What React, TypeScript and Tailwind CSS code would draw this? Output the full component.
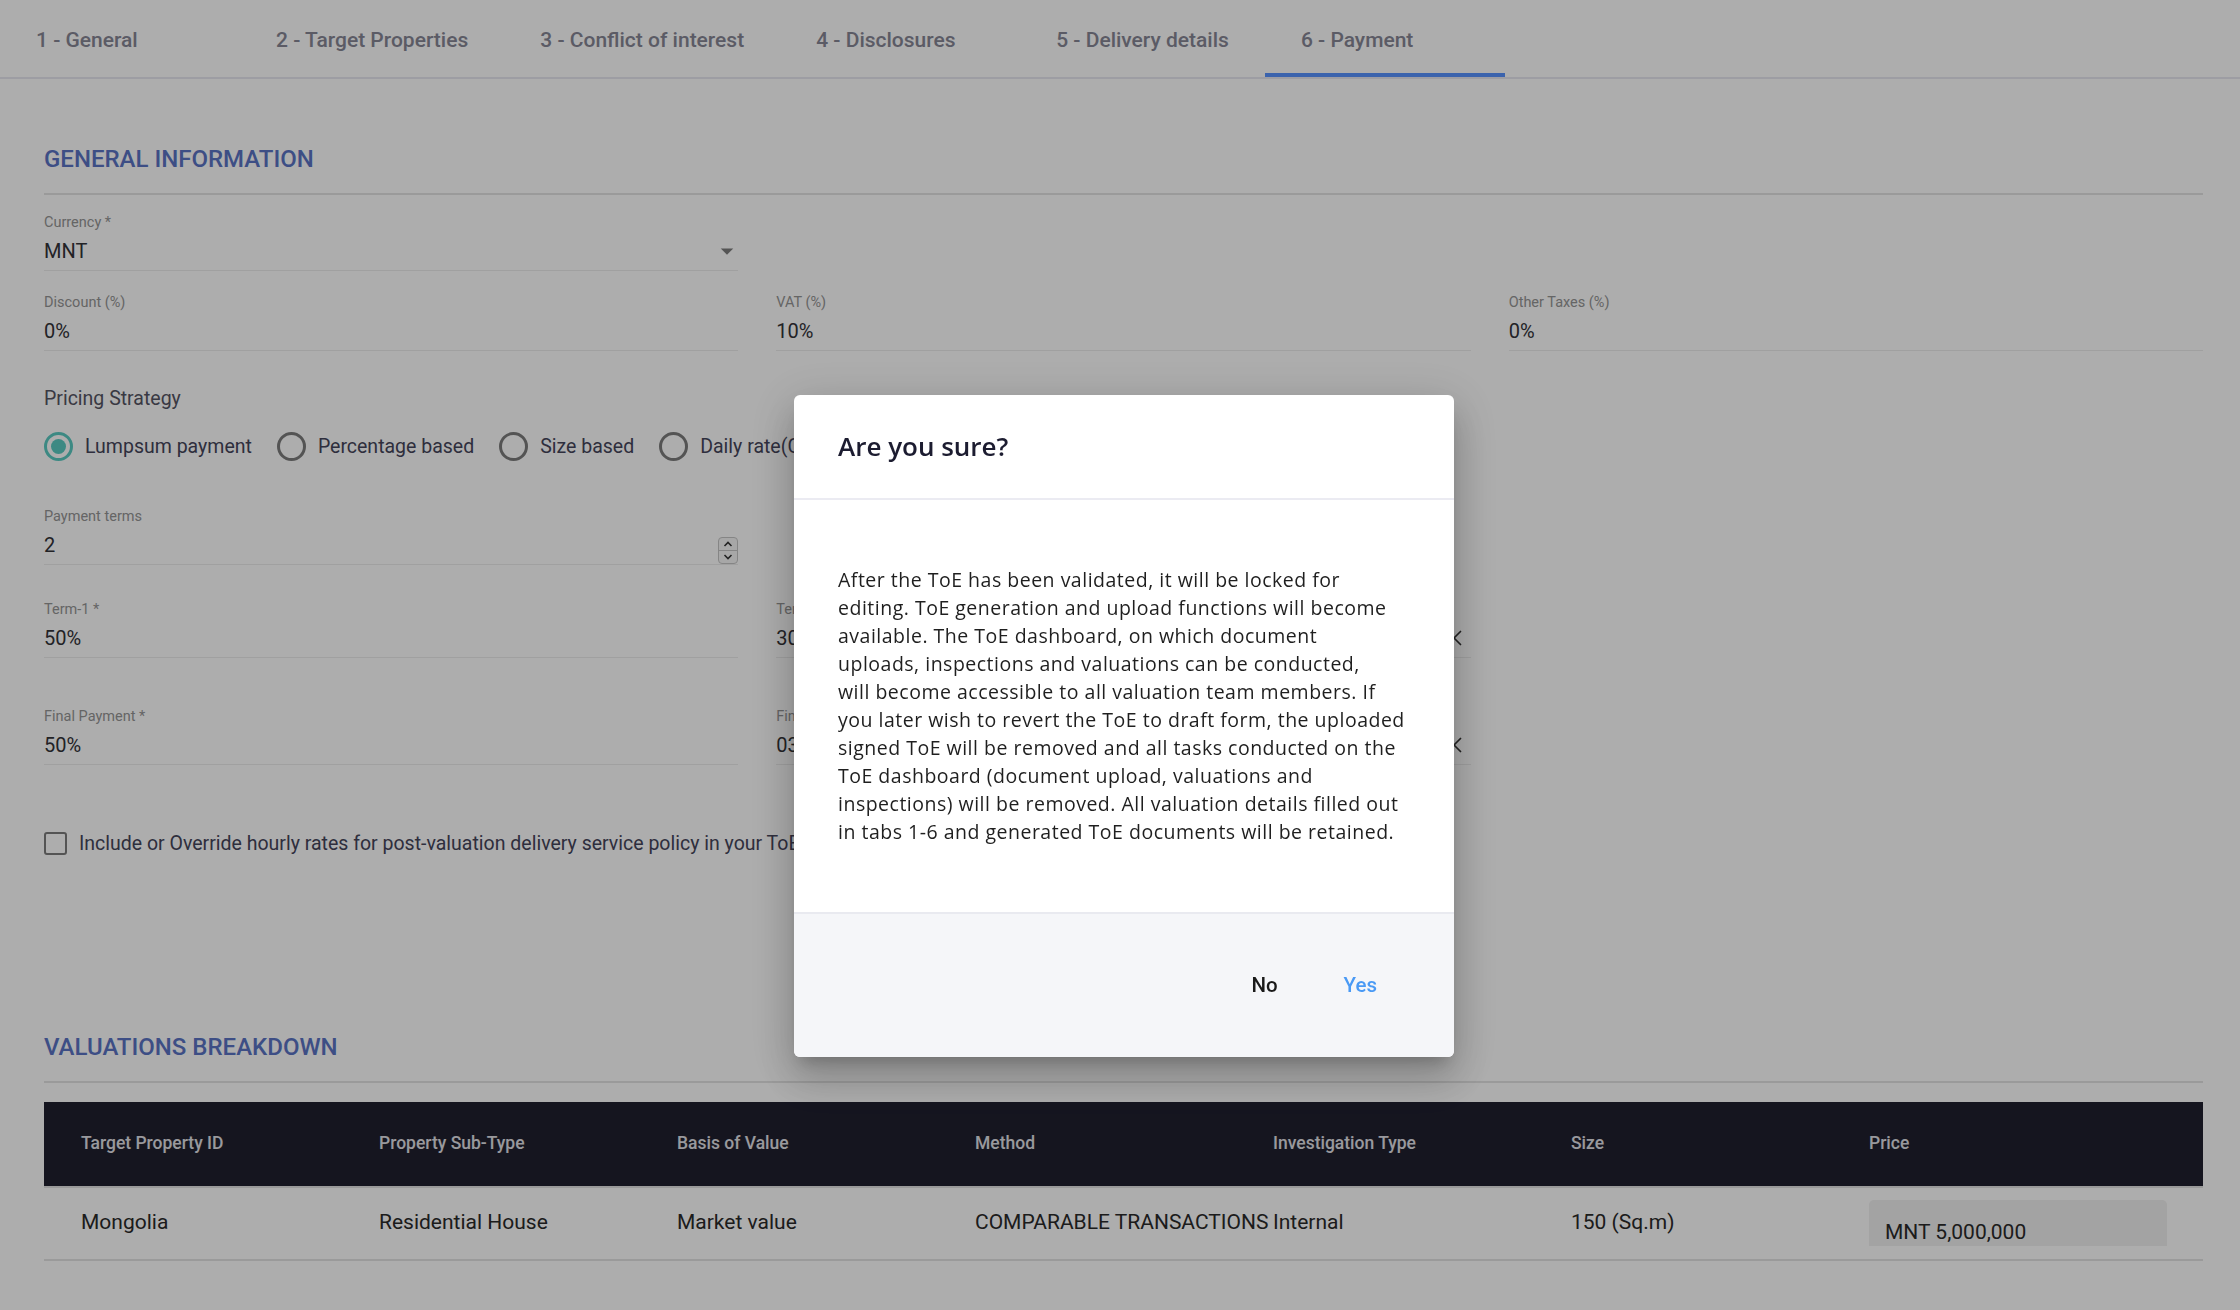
import { X } from 'lucide-react';

const tabs = [
  '1 - General',
  '2 - Target Properties',
  '3 - Conflict of interest',
  '4 - Disclosures',
  '5 - Delivery details',
  '6 - Payment',
];

const columns = [
  'Target Property ID',
  'Property Sub-Type',
  'Basis of Value',
  'Method',
  'Investigation Type',
  'Size',
  'Price',
];

const dialogLines = [
  'After the ToE has been validated, it will be locked for',
  'editing. ToE generation and upload functions will become',
  'available. The ToE dashboard, on which document',
  'uploads, inspections and valuations can be conducted,',
  'will become accessible to all valuation team members. If',
  'you later wish to revert the ToE to draft form, the uploaded',
  'signed ToE will be removed and all tasks conducted on the',
  'ToE dashboard (document upload, valuations and',
  'inspections) will be removed. All valuation details filled out',
  'in tabs 1-6 and generated ToE documents will be retained.',
];

type FieldProps = {
  label: string;
  value: string;
  adornment?: React.ReactNode;
};

// Underlined text field, label on top
const Field = ({ label, value, adornment }: FieldProps) => (
  <div className="flex flex-col">
    <span className="mb-[8px] text-[14.5px] leading-[17px] text-[#959595]">{label}</span>
    <div className="box-content flex h-[24px] items-center justify-between border-b border-[#ececec] pb-[7px]">
      <span className="text-[20px] leading-[24px] text-[#333338]">{value}</span>
      {adornment}
    </div>
  </div>
);

const Radio = ({ checked, label }: { checked?: boolean; label: string }) => (
  <label className="flex items-center gap-[12px]">
    <span
      className={`flex h-[29px] w-[29px] items-center justify-center rounded-full border-[3px] ${
        checked ? 'border-[#5acbc2]' : 'border-[#7d7d7d]'
      }`}
    >
      {checked && <span className="h-[15px] w-[15px] rounded-full bg-[#5acbc2]" />}
    </span>
    <span className="text-[19.5px] text-[#45455a]">{label}</span>
  </label>
);

const SectionTitle = ({ children }: { children: React.ReactNode }) => (
  <h2 className="border-b-2 border-[#e4e4e4] pb-[20px] text-[24px] font-medium leading-[28px] text-[#5a74c5]">
    {children}
  </h2>
);

const App = () => {
  return (
    <div className="relative min-h-[1310px] bg-white font-['Roboto',sans-serif]">
      {/* Step tabs */}
      <nav className="flex h-[79px] border-b-2 border-[#e7e7f0]">
        {tabs.map((tab, i) => (
          <div
            key={tab}
            className="relative flex min-w-[240px] items-center px-[36px] pt-[5px] text-[21px] font-medium text-[#878796]"
          >
            {tab}
            {i === tabs.length - 1 && (
              <span className="absolute bottom-0 left-0 right-0 h-[4px] bg-[#5893ff]" />
            )}
          </div>
        ))}
      </nav>

      <main className="pl-[44px] pr-[37px]">
        {/* GENERAL INFORMATION */}
        <section className="pt-[66px]">
          <SectionTitle>GENERAL INFORMATION</SectionTitle>

          <div className="mt-[19px] grid grid-cols-3 gap-x-[38px] gap-y-[23px]">
            <Field
              label="Currency *"
              value="MNT"
              adornment={
                <svg viewBox="0 0 24 24" className="mr-[-4px] h-[30px] w-[30px] fill-[#7d7d7d]">
                  <path d="M7 10l5 5 5-5z" />
                </svg>
              }
            />
            <div className="col-span-2" />
            <Field label="Discount (%)" value="0%" />
            <Field label="VAT (%)" value="10%" />
            <Field label="Other Taxes (%)" value="0%" />
          </div>

          <p className="mt-[36px] text-[19.5px] leading-[24px] text-[#555564]">Pricing Strategy</p>
          <div className="mt-[21px] flex items-center gap-[25px]">
            <Radio checked label="Lumpsum payment" />
            <Radio label="Percentage based" />
            <Radio label="Size based" />
            <Radio label="Daily rate(Currency)" />
          </div>

          <div className="mt-[47px] grid grid-cols-3 gap-x-[38px]">
            <Field
              label="Payment terms"
              value="2"
              adornment={
                <span className="mb-[-10px] flex h-[27px] w-[20px] flex-col items-center justify-center rounded-[4px] border border-[#c4c4c4] bg-[#f7f7f7]">
                  <svg viewBox="0 0 10 6" className="h-[6px] w-[10px] fill-none stroke-[#333] stroke-[1.6]">
                    <path d="M1.5 5L5 1.5 8.5 5" />
                  </svg>
                  <span className="my-[3px] h-px w-full bg-[#c4c4c4]" />
                  <svg viewBox="0 0 10 6" className="h-[6px] w-[10px] fill-none stroke-[#333] stroke-[1.6]">
                    <path d="M1.5 1L5 4.5 8.5 1" />
                  </svg>
                </span>
              }
            />
          </div>

          <div className="mt-[36px] grid grid-cols-3 gap-x-[38px] gap-y-[50px]">
            <Field label="Term-1 *" value="50%" />
            <Field
              label="Term-1 Due Date *"
              value="30/06/2024"
              adornment={<X className="mr-[4px] h-[26px] w-[26px] text-[#333]" strokeWidth={1.6} />}
            />
            <div />
            <Field label="Final Payment *" value="50%" />
            <Field
              label="Final Payment Due Date *"
              value="03/07/2024"
              adornment={<X className="mr-[4px] h-[26px] w-[26px] text-[#333]" strokeWidth={1.6} />}
            />
            <div />
          </div>

          <label className="mt-[64px] flex items-center gap-[12px]">
            <span className="h-[23px] w-[23px] rounded-[3px] border-[2.5px] border-[#7d7d7d]" />
            <span className="text-[19.5px] text-[#45455a]">
              Include or Override hourly rates for post-valuation delivery service policy in your ToE
            </span>
          </label>
        </section>

        {/* VALUATIONS BREAKDOWN */}
        <section className="mt-[174px]">
          <SectionTitle>VALUATIONS BREAKDOWN</SectionTitle>

          <div className="mt-[19px]">
            <div className="grid h-[86px] grid-cols-[298px_298px_298px_298px_298px_298px_1fr] items-center border-b-2 border-[#e3e3e3] bg-[#1f1f2e]">
              {columns.map((c) => (
                <span key={c} className="pl-[37px] text-[17.5px] font-medium text-[#e2e2e8]">
                  {c}
                </span>
              ))}
            </div>
            <div className="grid h-[73px] grid-cols-[298px_298px_298px_298px_298px_298px_1fr] items-center border-b-2 border-[#e3e3e3] text-[21px] text-[#2a2a2a]">
              <span className="pl-[37px]">Mongolia</span>
              <span className="pl-[37px]">Residential House</span>
              <span className="pl-[37px]">Market value</span>
              <span className="whitespace-nowrap pl-[37px]">COMPARABLE TRANSACTIONS</span>
              <span className="pl-[37px]">Internal</span>
              <span className="pl-[37px]">150 (Sq.m)</span>
              <div className="pl-[37px] pr-[36px]">
                <div className="h-[46px] rounded-t-[5px] bg-[#f0f0f0] pl-[16px] pt-[20px] leading-[24px]">
                  MNT 5,000,000
                </div>
              </div>
            </div>
          </div>
        </section>
      </main>

      {/* Confirmation dialog */}
      <div className="fixed inset-0 flex items-start justify-center bg-black/[0.32] pl-[8px] pt-[395px]">
        <div className="w-[660px] overflow-hidden rounded-[6px] bg-white shadow-[0px_11px_15px_-7px_rgba(0,0,0,0.2),0px_24px_38px_3px_rgba(0,0,0,0.14),0px_9px_46px_8px_rgba(0,0,0,0.12)]">
          <div className="flex h-[105px] items-center border-b-2 border-[#ebebf2] px-[44px]">
            <h3 className="font-['Open_Sans',sans-serif] text-[26px] font-semibold text-[#1c1c30]">
              Are you sure?
            </h3>
          </div>
          <div className="whitespace-nowrap px-[44px] py-[66px] font-['Open_Sans',sans-serif] text-[19.5px] leading-[28px] tracking-[0.5px] text-[#1f1f1f]">
            {dialogLines.map((line, i) => (
              <span key={i} className="block">
                {line}
              </span>
            ))}
          </div>
          <div className="flex h-[145px] items-center justify-end gap-[66px] border-t-2 border-[#e9eaf0] bg-[#f5f6f9] pr-[77px]">
            <button type="button" className="text-[20.5px] font-medium text-[#1a1a1a]">
              No
            </button>
            <button type="button" className="text-[20.5px] font-medium text-[#4a9af5]">
              Yes
            </button>
          </div>
        </div>
      </div>
    </div>
  );
};

export default App;
